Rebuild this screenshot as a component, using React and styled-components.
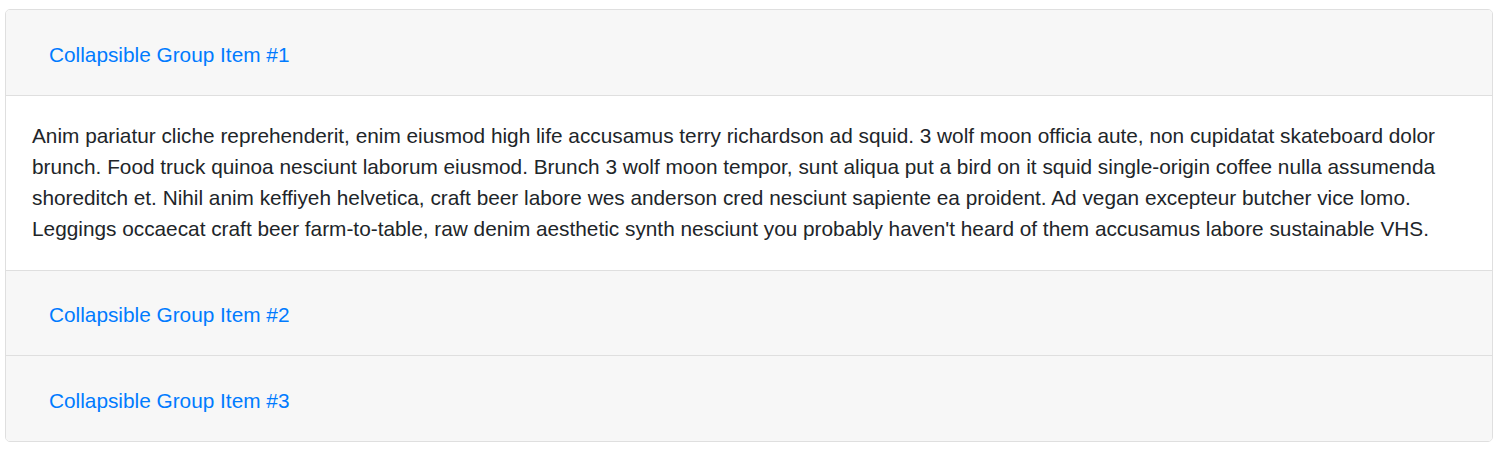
import React, { useState } from 'react';
import styled, { createGlobalStyle } from 'styled-components';

const GlobalStyle = createGlobalStyle`
  body {
    margin: 0;
    background: #fff;
    font-family: "Liberation Sans", Arial, sans-serif;
    color: #212529;
  }
`;

const Page = styled.div`
  padding: 9px 13px 0 5px;
`;

const Accordion = styled.div`
  display: flex;
  flex-direction: column;
  border: 1px solid #dfdfdf;
  border-radius: 5px;
  overflow: hidden;
  background: #fff;
`;

const Item = styled.div`
  & + & {
    border-top: 1px solid #dfdfdf;
  }
`;

const Header = styled.div`
  background: #f7f7f7;
  padding: 17.5px 26px 13px;
  border-bottom: ${p => (p.open ? '1px solid #dfdfdf' : 'none')};
`;

const Toggle = styled.button`
  display: inline-block;
  margin: 0;
  padding: 10px 16px 11px;
  border: 1px solid transparent;
  background: transparent;
  color: #007bff;
  font-family: inherit;
  font-size: 20.8px;
  line-height: 31.2px;
  cursor: pointer;
  text-align: left;
`;

const Body = styled.div`
  padding: 24px 26px 25px;
  font-size: 20.8px;
  line-height: 31.2px;
  color: #212529;
`;

const text =
  "Anim pariatur cliche reprehenderit, enim eiusmod high life accusamus terry richardson ad squid. 3 wolf moon officia aute, non cupidatat skateboard dolor brunch. Food truck quinoa nesciunt laborum eiusmod. Brunch 3 wolf moon tempor, sunt aliqua put a bird on it squid single-origin coffee nulla assumenda shoreditch et. Nihil anim keffiyeh helvetica, craft beer labore wes anderson cred nesciunt sapiente ea proident. Ad vegan excepteur butcher vice lomo. Leggings occaecat craft beer farm-to-table, raw denim aesthetic synth nesciunt you probably haven't heard of them accusamus labore sustainable VHS.";

const items = [1, 2, 3];

export default function App() {
  const [open, setOpen] = useState(1);

  return (
    <>
      <GlobalStyle />
      <Page>
        <Accordion>
          {items.map(n => (
            <Item key={n}>
              <Header open={open === n}>
                <Toggle onClick={() => setOpen(open === n ? 0 : n)}>
                  Collapsible Group Item #{n}
                </Toggle>
              </Header>
              {open === n && <Body>{text}</Body>}
            </Item>
          ))}
        </Accordion>
      </Page>
    </>
  );
}
